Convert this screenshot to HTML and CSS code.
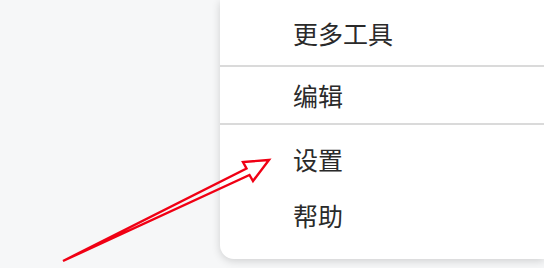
FILE: index.html
```html
<!DOCTYPE html>
<html lang="zh-CN">
<head>
<meta charset="utf-8">
<link rel="stylesheet" href="styles.css">
</head>
<body>
<div class="page">
  <div class="menu">
    <div class="item first">更多工具</div>
    <div class="sep"></div>
    <div class="item second">编辑</div>
    <div class="sep"></div>
    <div class="group">
      <div class="item">设置</div>
      <div class="item">帮助</div>
    </div>
  </div>
  <svg class="arrow" width="544" height="268" viewBox="0 0 544 268">
    <polygon points="63,261 246.5,168.5 243,162 269,160 253,181 249.5,175" fill="none" stroke="#f00014" stroke-width="2.4" stroke-linejoin="miter"/>
  </svg>
</div>
</body>
</html>
```
FILE: styles.css
```css
html, body {
  margin: 0;
  padding: 0;
}
body {
  background: #f6f7f8;
  width: 544px;
  height: 268px;
  overflow: hidden;
  font-family: "Noto Sans CJK SC", "Noto Sans", sans-serif;
}
.page {
  position: relative;
  width: 544px;
  height: 268px;
}
.menu {
  margin-left: 220px;
  width: 324px;
  height: 259px;
  background: #ffffff;
  border-bottom-left-radius: 14px;
  box-shadow: 0 2px 8px rgba(0, 0, 0, 0.16);
  display: flex;
  flex-direction: column;
}
.item {
  display: flex;
  align-items: center;
  padding-left: 73px;
  font-size: 25px;
  color: #2a2a2a;
  height: 56px;
}
.item.first {
  height: 65px;
}
.item.second {
  height: 56px;
}
.sep {
  height: 2px;
  background: #dadada;
}
.group {
  padding-top: 6px;
}
.arrow {
  position: absolute;
  left: 0;
  top: 0;
}
```
